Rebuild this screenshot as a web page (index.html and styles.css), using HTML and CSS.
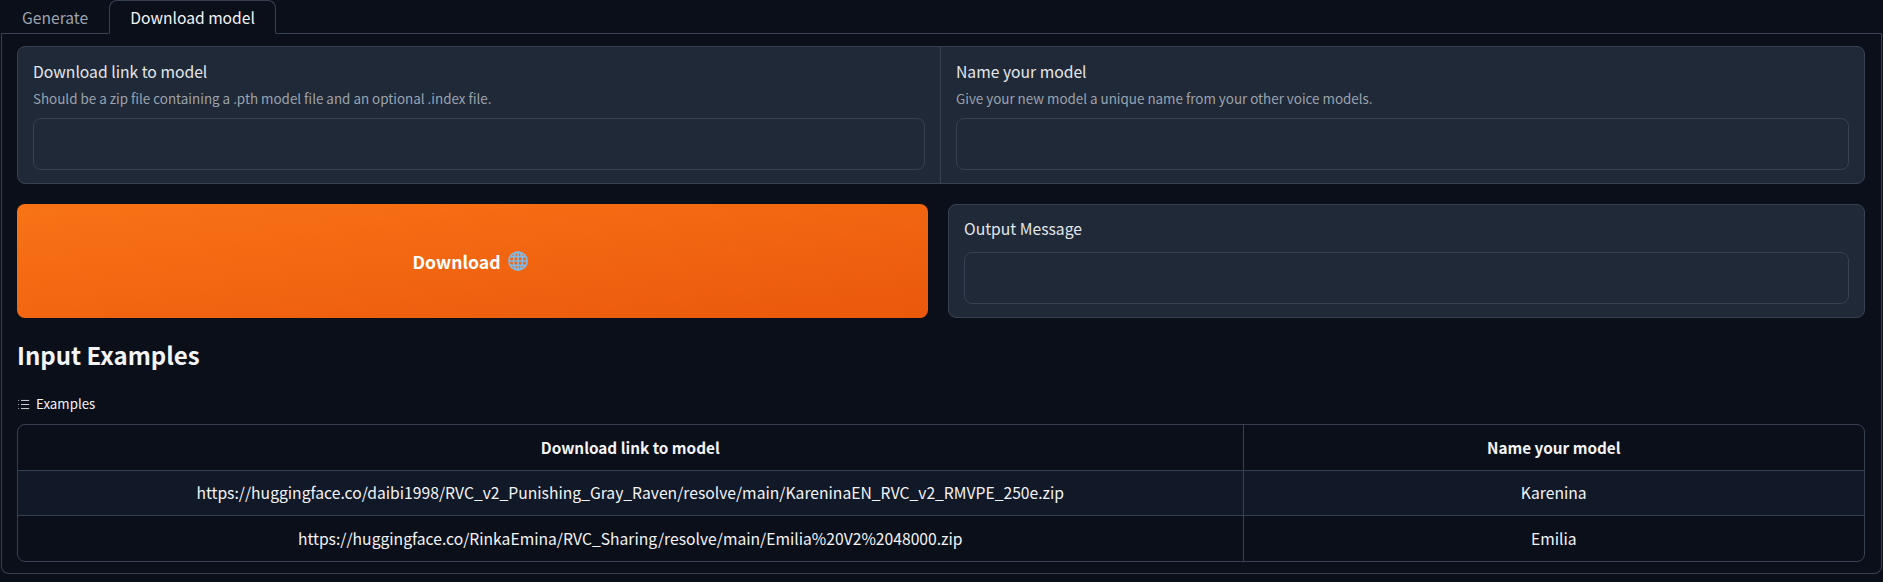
FILE: index.html
```html
<!DOCTYPE html>
<html lang="en">
<head>
<meta charset="utf-8">
<title>Download model</title>
<link rel="stylesheet" href="styles.css">
</head>
<body>
<div class="tabs">
  <button class="tab">Generate</button>
  <button class="tab tab-active">Download model</button>
  <div class="tab-rest"></div>
</div>
<main class="panel">
  <section class="form-card">
    <div class="field field-left">
      <div class="label">Download link to model</div>
      <div class="info">Should be a zip file containing a .pth model file and an optional .index file.</div>
      <div class="input"></div>
    </div>
    <div class="field field-right">
      <div class="label">Name your model</div>
      <div class="info">Give your new model a unique name from your other voice models.</div>
      <div class="input"></div>
    </div>
  </section>
  <section class="action-row">
    <button class="primary">Download
      <svg class="globe" viewBox="0 0 20 20" width="20" height="20" aria-hidden="true">
        <g fill="none" stroke="#80bbea" stroke-width="1.7">
          <circle cx="10" cy="10" r="9"/>
          <ellipse cx="10" cy="10" rx="4.5" ry="9"/>
          <path d="M10 1v18M1 10h18M2.4 5.6h15.2M2.4 14.4h15.2"/>
        </g>
      </svg>
    </button>
    <div class="output-card">
      <div class="label">Output Message</div>
      <div class="input"></div>
    </div>
  </section>
  <h2 class="heading">Input Examples</h2>
  <div class="examples-label">
    <svg class="list-icon" viewBox="0 0 32 32" width="13" height="13" aria-hidden="true">
      <path d="M10 6h20M10 16h20M10 26h20" stroke="#e5e7eb" stroke-width="2.2" fill="none"/>
      <path d="M2.5 6h2.5M2.5 16h2.5M2.5 26h2.5" stroke="#9ca3af" stroke-width="2.5" fill="none"/>
    </svg>
    <span>Examples</span>
  </div>
  <div class="table-wrap">
    <table class="examples">
      <colgroup><col class="col-link"><col></colgroup>
      <thead>
        <tr><th>Download link to model</th><th>Name your model</th></tr>
      </thead>
      <tbody>
        <tr class="row-odd"><td>https://huggingface.co/daibi1998/RVC_v2_Punishing_Gray_Raven/resolve/main/KareninaEN_RVC_v2_RMVPE_250e.zip</td><td>Karenina</td></tr>
        <tr><td>https://huggingface.co/RinkaEmina/RVC_Sharing/resolve/main/Emilia%20V2%2048000.zip</td><td>Emilia</td></tr>
      </tbody>
    </table>
  </div>
</main>
</body>
</html>
```
FILE: styles.css
```css
* { box-sizing: border-box; }
html, body { margin: 0; height: 582px; background: #0b0f19; overflow: hidden; }
body {
  font-family: "Noto Sans CJK SC", "Source Sans Pro", "Noto Sans", sans-serif;
  color: #f3f4f6;
  padding: 0 1px;
}
.tabs { display: flex; height: 34px; align-items: stretch; }
.tab {
  font: inherit; font-size: 15.65px; background: none; color: #9ca3af;
  border: 1px solid transparent; border-left: 0; border-bottom: 1px solid #374151;
  padding: 0 20px 0 21px; margin: 0; white-space: nowrap;
}
.tab-active {
  color: #f3f4f6; padding: 0 20px;
  border: 1px solid #374151; border-bottom: 1px solid #0b0f19;
  border-radius: 8px 8px 0 0;
}
.tab-rest { flex: 1; border-bottom: 1px solid #374151; }
.panel {
  height: 541px; margin-top: -1px;
  border: 1px solid #374151; border-top: 0; border-radius: 0 0 8px 8px;
  padding: 13px 16px 0 15px;
  display: flex; flex-direction: column;
}
.form-card {
  display: flex; height: 138px; background: #1f2937;
  border: 1px solid #374151; border-radius: 8px;
}
.field { min-width: 0; padding: 14px 15px 0; }
.field-left { flex: 0 0 922px; }
.field-right { flex: 1 1 0; border-left: 1px solid #374151; }
.label { font-size: 15.7px; line-height: 22px; color: #e5e7eb; }
.info { font-size: 13.4px; line-height: 20px; color: #9ca3af; margin-top: 5px; }
.input { height: 52px; margin-top: 10px; border: 1px solid #374151; border-radius: 8px; background: #1f2937; }
.action-row { display: grid; grid-template-columns: 911fr 917fr; gap: 20px; margin-top: 20px; height: 114px; }
.primary {
  font: inherit; font-size: 17.6px; font-weight: 600; color: #fff; border: 0; border-radius: 8px;
  background: linear-gradient(to bottom right, #f97316, #ea580c);
  display: flex; align-items: center; justify-content: center; gap: 8px; padding: 0 4px 0 0;
}
.globe { display: block; }
.output-card { background: #1f2937; border: 1px solid #374151; border-radius: 8px; padding: 13px 15px 0; }
.output-card .input { margin-top: 12px; }
.heading { font-size: 24px; font-weight: 600; line-height: 32px; margin: 21px 0 0; color: #f3f4f6; }
.examples-label { display: flex; align-items: center; gap: 6px; font-size: 13.3px; line-height: 18px; margin-top: 24px; }
.list-icon { display: block; }
.table-wrap { margin-top: 11px; border: 1px solid #374151; border-radius: 8px; overflow: hidden; height: 138px; }
.examples { width: 100%; height: 100%; border-collapse: collapse; table-layout: fixed; font-size: 15.68px; }
.col-link { width: 1225px; }
.examples th, .examples td { text-align: center; padding: 0 8px; border-left: 1px solid #374151; border-top: 1px solid #374151; }
.examples th { font-weight: 600; font-size: 15.3px; border-top: 0; height: 45px; }
.examples th:first-child, .examples td:first-child { border-left: 0; }
.examples td { height: 45px; }
.row-odd { background: #111827; }
```
